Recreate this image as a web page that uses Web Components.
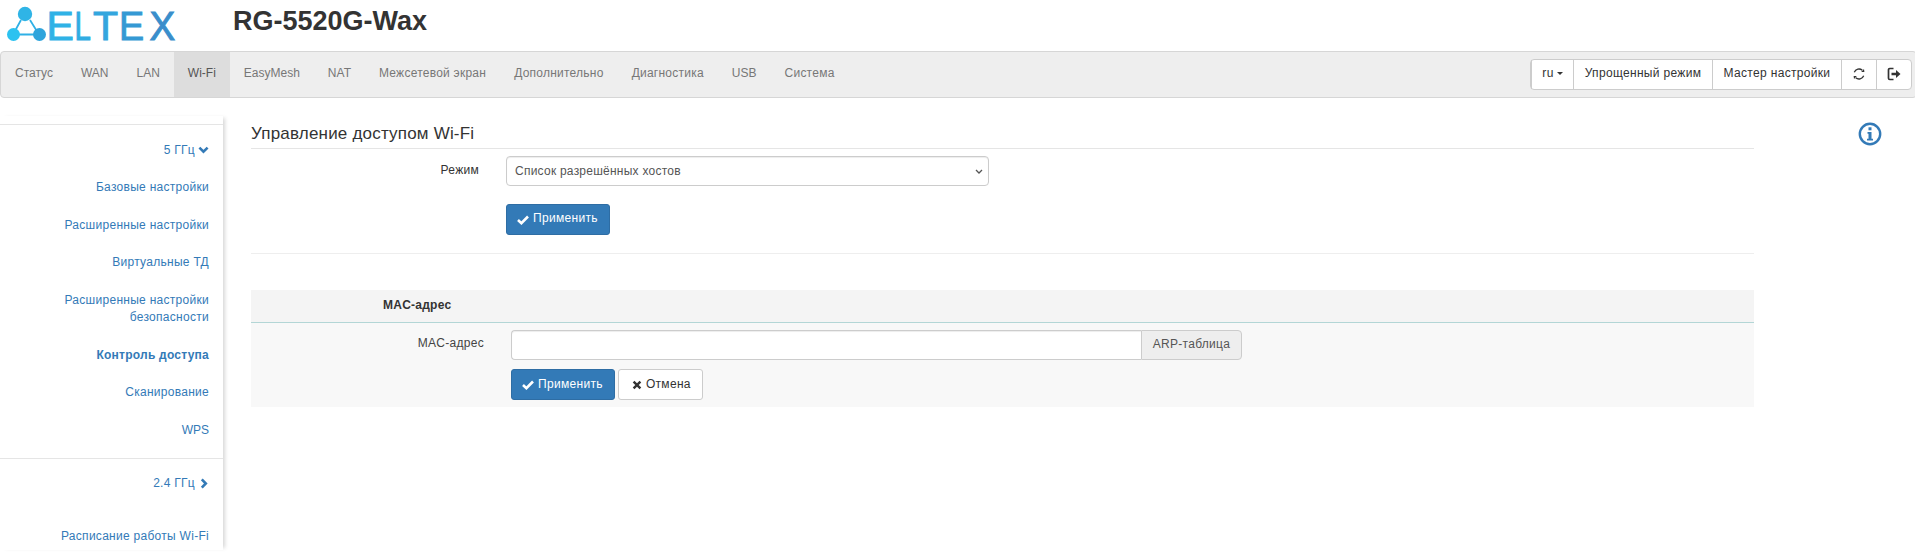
<!DOCTYPE html>
<html lang="ru"><head><meta charset="utf-8"><title>RG-5520G-Wax</title>
<style>
html,body{margin:0;padding:0;background:#fff;height:559px;overflow:hidden}
body{font:12px/17.14px "Liberation Sans",Arial,sans-serif;color:#333;letter-spacing:.28px}
</style></head><body>
<el-page>
  <el-header slot="header" model="RG-5520G-Wax"></el-header>
  <el-navbar slot="nav">
    <el-nav-item latin>Статус</el-nav-item><el-nav-item latin>WAN</el-nav-item><el-nav-item latin>LAN</el-nav-item><el-nav-item latin active>Wi-Fi</el-nav-item><el-nav-item latin>EasyMesh</el-nav-item><el-nav-item latin>NAT</el-nav-item><el-nav-item>Межсетевой экран</el-nav-item><el-nav-item>Дополнительно</el-nav-item><el-nav-item>Диагностика</el-nav-item><el-nav-item latin>USB</el-nav-item><el-nav-item>Система</el-nav-item>
    <el-tools slot="tools"></el-tools>
  </el-navbar>
  <el-sidebar slot="side">
    <el-side-item icon="down" group>5 ГГц</el-side-item>
    <el-side-item>Базовые настройки</el-side-item>
    <el-side-item>Расширенные настройки</el-side-item>
    <el-side-item>Виртуальные ТД</el-side-item>
    <el-side-item>Расширенные настройки безопасности</el-side-item>
    <el-side-item current>Контроль доступа</el-side-item>
    <el-side-item>Сканирование</el-side-item>
    <el-side-item latin>WPS</el-side-item>
    <el-side-item icon="right" group divided>2.4 ГГц</el-side-item>
    <el-side-item spaced>Расписание работы Wi-Fi</el-side-item>
  </el-sidebar>
  <el-access-form slot="main"></el-access-form>
  <el-mac-table slot="main"></el-mac-table>
  <el-info slot="info"></el-info>
</el-page>
<script>
const ICONS={
 ok:'<svg width="12" height="10" viewBox="0 0 12 10"><path d="M1 5 4.400 8.200 11 1.500" fill="none" stroke="currentColor" stroke-width="2.600"/></svg>',
 x:'<svg width="10" height="10" viewBox="0 0 10 10"><path d="M1.600 1.600 8.400 8.400M8.400 1.600 1.600 8.400" fill="none" stroke="currentColor" stroke-width="2.400"/></svg>',
 down:'<svg width="11" height="8" viewBox="0 0 11 8"><path d="M1.400 1.600 5.500 5.600 9.600 1.600" fill="none" stroke="currentColor" stroke-width="2.600"/></svg>',
 right:'<svg width="8" height="11" viewBox="0 0 8 11"><path d="M1.800 1.400 5.800 5.500 1.800 9.600" fill="none" stroke="currentColor" stroke-width="2.600"/></svg>'
};
function def(name,html,init){
  customElements.define(name,class extends HTMLElement{
    constructor(){super();this.attachShadow({mode:'open'}).innerHTML=html;}
    connectedCallback(){if(init)init(this,this.shadowRoot);}
  });
}
def('el-page',`<style>
:host{display:block;width:1915px;height:559px;overflow:hidden;position:relative}
.body{display:flex;align-items:flex-start;padding-top:18px}
.side{flex:0 0 223px}
.main{flex:0 0 1503px;margin-left:28px}
.info{flex:0 0 auto;margin-left:104px;padding-top:6px}
</style><slot name="header"></slot><slot name="nav"></slot>
<div class="body"><div class="side"><slot name="side"></slot></div><div class="main"><slot name="main"></slot></div><div class="info"><slot name="info"></slot></div></div>`);

def('el-header',`<style>
:host{display:flex;align-items:flex-start;height:51px;box-sizing:border-box}
svg{display:block;flex:none}
h1{margin:8px 0 0 57px;font:700 27px/27px "Liberation Sans",Arial,sans-serif;color:#333;letter-spacing:0}
</style>
<svg width="176" height="51" viewBox="0 0 176 51" role="img" aria-label="ELTEX">
<g stroke="#2fb0e6" stroke-width="1.800" fill="none"><path d="M21 20 13 34.500H39L30 20"/></g>
<circle cx="25" cy="14" r="7.200" fill="#2fb4e6"/><circle cx="13.500" cy="34.500" r="6.500" fill="#2cc2f0"/><circle cx="39.500" cy="34.500" r="6.500" fill="#2ea4dc"/>
<g font-family="Liberation Sans" font-size="41" letter-spacing="0" stroke-width="1">
<text x="46.500" y="40" fill="#2fb2e6" stroke="#2fb2e6">E</text>
<text transform="translate(74.500 40) scale(.72 1)" fill="#30ace2" stroke="#30ace2">L</text>
<text x="93" y="40" fill="#33a6de" stroke="#33a6de">T</text>
<text transform="translate(119 40) scale(.92 1)" fill="#3599d4" stroke="#3599d4">E</text>
<text transform="translate(149.500 40) scale(.94 1)" fill="#398ecb" stroke="#398ecb">X</text>
</g>
</svg><h1></h1>`,(el,r)=>{r.querySelector('h1').textContent=el.getAttribute('model');});

def('el-navbar',`<style>
:host{display:flex;box-sizing:border-box;height:47px;width:1917px;background:#eee;border:1px solid #d6d6d6;border-radius:4px;align-items:stretch}
.items{display:flex;flex:1}
.tools{display:flex;align-items:flex-start;padding:7px 4px 0 0}
</style><div class="items"><slot></slot></div><div class="tools"><slot name="tools"></slot></div>`);

def('el-nav-item',`<style>
:host{display:block;padding:0 14px;line-height:43px;color:#777;letter-spacing:.24px}
:host([latin]){letter-spacing:0}
:host([active]){background:#ddd;color:#555}
</style><slot></slot>`);

def('el-tools',`<style>
:host{display:flex;height:31px;box-sizing:border-box;background:#fff;border:1px solid #ccc;border-radius:4px;color:#333;line-height:27px;letter-spacing:.32px}
div{display:flex;align-items:flex-start;justify-content:center;border-left:1px solid #ccc;box-sizing:border-box}
div:first-child{border-left:0}
.caret{display:inline-block;width:0;height:0;border-top:3px solid #333;border-left:3px solid transparent;border-right:3px solid transparent;margin:12px 0 0 3px}
svg{display:block;margin-top:7px}
</style>
<div style="width:42px">ru<span class="caret"></span></div>
<div style="width:139px">Упрощенный режим</div>
<div style="width:129px">Мастер настройки</div>
<div style="width:35px"><svg width="14" height="14" viewBox="0 0 14 14" aria-hidden="true"><g fill="none" stroke="#333" stroke-width="1.300"><path d="M2.300 5.200A5 5 0 0 1 10.300 3.300"/><path d="M11.700 8.800A5 5 0 0 1 3.700 10.700"/></g><path d="M9.200 4.900 12.400 5.100 12 2z" fill="#333"/><path d="M4.800 9.100 1.600 8.900 2 12z" fill="#333"/></svg></div>
<div style="width:35px"><svg width="14" height="14" viewBox="0 0 14 14" aria-hidden="true"><path d="M6.500 1.500H2.800Q1.500 1.500 1.500 2.800V11.200Q1.500 12.500 2.800 12.500H6.500" fill="none" stroke="#333" stroke-width="1.700"/><path d="M4.500 5.700H9V3L13.500 7 9 11V8.300H4.500z" fill="#333"/></svg></div>`);

def('el-sidebar',`<style>
:host{display:block;box-sizing:border-box;width:223px;height:434px;padding-top:8px;background:#fff;box-shadow:4px 0 4px -2px rgba(0,0,0,.16)}
.in{border-top:1px solid #e5e5e5;padding-top:6.500px}
</style><div class="in"><slot></slot></div>`);

def('el-side-item',`<style>
:host{display:block;padding:10px 14px 10px 40px;line-height:17.500px;text-align:right;color:#337ab7}
:host([current]){font-weight:700;letter-spacing:.24px;padding-top:10.500px;padding-bottom:9.500px}
:host([latin]){letter-spacing:0}
:host([divided]){border-top:1px solid #e5e5e5;margin-top:9px;padding-top:16px}
:host([spaced]){padding-top:25px}
span{display:none;vertical-align:middle;line-height:0;margin-left:3px}
:host([icon]) span{display:inline-block}
:host([icon=right]) span{margin:0 1px 0 5px}
</style><slot></slot><span></span>`,(el,r)=>{const i=el.getAttribute('icon');if(i)r.querySelector('span').innerHTML=ICONS[i];});

def('el-button',`<style>
:host{display:inline-flex;align-items:center;box-sizing:border-box;height:31px;padding:0 11px 0 10px;border-radius:3px;background:#337ab7;border:1px solid #2e6da4;color:#fff;line-height:17px;gap:4px;letter-spacing:.32px}
:host([plain]){background:#fff;border-color:#ccc;color:#333;padding:0 11px 0 13px;gap:4px}
span{display:inline-flex;margin-top:1px}
.t{display:block;margin-top:var(--text-shift,-1px)}
</style><span></span><div class="t"><slot></slot></div>`,(el,r)=>{r.querySelector('span').innerHTML=ICONS[el.getAttribute('icon')];});

def('el-access-form',`<style>
:host{display:block;color:#333}
h2{margin:0;height:33px;box-sizing:border-box;padding-top:8px;border-bottom:1px solid #e5e5e5;font:400 17px/20px "Liberation Sans",Arial,sans-serif;color:#333;letter-spacing:.2px}
.row{display:grid;grid-template-columns:228px 1fr;column-gap:27px;margin-top:7px}
label{text-align:right;line-height:28px}
.sel{position:relative;width:483px;height:30px}
select{display:block;width:100%;height:30px;box-sizing:border-box;padding:0 6px 0 8px;font:12px "Liberation Sans",Arial,sans-serif;letter-spacing:.24px;color:#555;background:#fff;border:1px solid #ccc;border-radius:4px;box-shadow:inset 0 1px 1px rgba(0,0,0,.075);appearance:none;-webkit-appearance:none}
.sel svg{position:absolute;right:6px;top:13px;pointer-events:none}
.act{margin:18px 0 0 255px;display:flex;--text-shift:-2px}
hr{margin:18px 0 0;border:0;border-top:1px solid #eee}
</style><h2>Управление доступом Wi-Fi</h2>
<div class="row"><label for="m">Режим</label><div class="sel"><select id="m"><option>Список разрешённых хостов</option><option>Список запрещённых хостов</option></select><svg width="8" height="5" viewBox="0 0 8 5" aria-hidden="true"><path d="M1 1 4 4 7 1" fill="none" stroke="#555" stroke-width="1.300"/></svg></div></div>
<div class="act"><el-button icon="ok">Применить</el-button></div><hr>`);

def('el-mac-table',`<style>
:host{display:block;margin-top:36px;background:#f8f8f8;height:117px}
.head{display:grid;grid-template-columns:132px 1fr;height:33px;box-sizing:border-box;background:#f4f4f4;border-bottom:1px solid #b3d6d6;line-height:30px;font-weight:700;color:#333;letter-spacing:.25px}
.head b{grid-column:2}
.row{display:grid;grid-template-columns:233px 1fr;column-gap:27px;padding-top:7px}
label{text-align:right;line-height:27px;color:#444}
.group{display:flex;height:30px}
input{display:block;width:630px;box-sizing:border-box;height:30px;border:1px solid #ccc;border-right:0;border-radius:4px 0 0 4px;background:#fff;box-shadow:inset 0 1px 1px rgba(0,0,0,.075);padding:0 6px;font:12px "Liberation Sans",Arial,sans-serif}
.addon{box-sizing:border-box;width:101px;border:1px solid #ccc;border-radius:0 4px 4px 0;background:#eee;color:#555;text-align:center;line-height:26px}
.act{display:flex;gap:3px;margin:9px 0 0 260px}
</style><div class="head"><b>MAC-адрес</b></div>
<div class="row"><label for="a">MAC-адрес</label><div class="group"><input id="a" type="text"><div class="addon">ARP-таблица</div></div></div>
<div class="act"><el-button icon="ok">Применить</el-button><el-button icon="x" plain>Отмена</el-button></div>`);

def('el-info',`<style>:host{display:block;line-height:0}svg{display:block}</style>
<svg width="24" height="24" viewBox="0 0 24 24" role="img" aria-label="i"><circle cx="12" cy="12" r="10.200" fill="none" stroke="#337ab7" stroke-width="2.400"/><rect x="10.500" y="5.300" width="3" height="3" fill="#337ab7"/><path d="M9.500 10H13.500V16.800H15V18.500H9V16.800H10.500V11.700H9.500z" fill="#337ab7"/></svg>`);
</script>
</body></html>
